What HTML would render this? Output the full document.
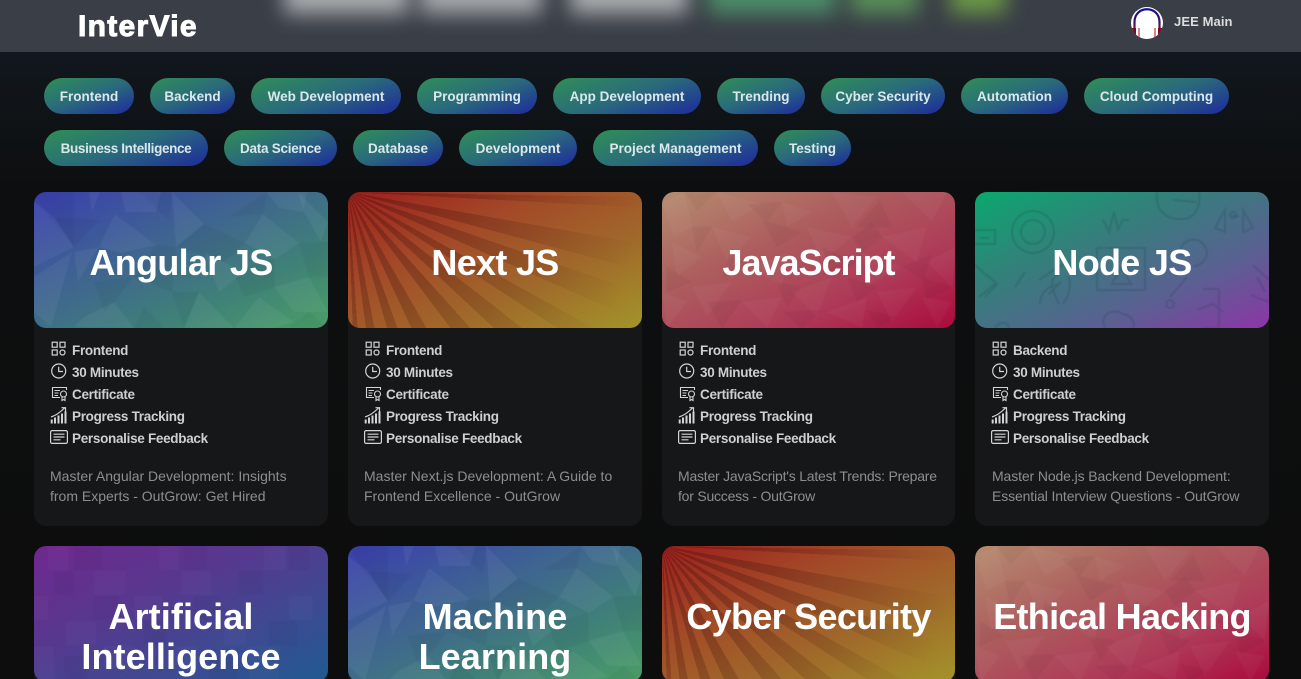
<!DOCTYPE html>
<html lang="en"><head><meta charset="utf-8"><title>InterVie</title>
<style>
*{box-sizing:border-box}
html,body{margin:0;padding:0;width:1301px;height:679px;overflow:hidden;background:#0d0d0e}
body{position:relative;font-family:"Liberation Sans",sans-serif;background:linear-gradient(180deg,#11171d 52px,#0f1215 130px,#0d0e0f 190px,#0d0d0e 100%)}
header{position:absolute;left:0;top:0;width:1301px;height:52px;background:#3a3f47;overflow:hidden}
.b{position:absolute;top:-26px;height:40px;filter:blur(10px)}
.logo{position:absolute;left:78px;top:9px;font-size:30px;line-height:36px;font-weight:700;color:#fff;letter-spacing:1.3px;-webkit-text-stroke:1px #fff}
.user{position:absolute;left:1174px;top:14px;font-size:13px;line-height:16px;font-weight:700;color:#dcdcdc;letter-spacing:.1px}
.av{position:absolute;left:1131px;top:6px}
.pill{position:absolute;height:36px;border-radius:18px;background:linear-gradient(160deg,#2f8f55 0%,#2a6a7c 50%,#1d2a9c 100%);color:#dbe8ea;font-size:13.5px;font-weight:700;line-height:38px;text-align:center;letter-spacing:0;white-space:nowrap}
.card{position:absolute;width:294px;height:334px;background:#161719;border-radius:12px}
.card.c{height:133px;overflow:hidden;border-radius:12px 12px 0 0}
.img{position:absolute;left:0;top:0;width:100%;height:136px;border-radius:12px;overflow:hidden}
.img svg{position:absolute;left:0;top:0;filter:blur(.5px)}
.rays{position:absolute;inset:0;background:conic-gradient(from 90deg at 0 0,transparent 0 1deg,rgba(50,10,10,.3) 1deg 3deg,transparent 3deg 10deg,rgba(50,10,10,.3) 10deg 15deg,transparent 15deg 19deg,rgba(50,10,10,.3) 19deg 24deg,transparent 24deg 29deg,rgba(50,10,10,.3) 29deg 33deg,transparent 33deg 38deg,rgba(50,10,10,.3) 38deg 43deg,transparent 43deg 48deg,rgba(50,10,10,.3) 48deg 53deg,transparent 53deg 60deg,rgba(50,10,10,.3) 60deg 65deg,transparent 65deg 70deg,rgba(50,10,10,.3) 70deg 74deg,transparent 74deg 79deg,rgba(50,10,10,.3) 79deg 82.5deg,transparent 82.5deg 86deg,rgba(50,10,10,.3) 86deg 88deg,transparent 88deg 360deg);-webkit-mask-image:radial-gradient(circle at 0 0,#000 0,rgba(0,0,0,.75) 120px,rgba(0,0,0,.28) 230px,transparent 290px);mask-image:radial-gradient(circle at 0 0,#000 0,rgba(0,0,0,.75) 120px,rgba(0,0,0,.28) 230px,transparent 290px)}
.t{position:absolute;left:0;top:51px;width:100%;text-align:center;color:#fff;font-size:36px;line-height:40px;font-weight:700;letter-spacing:-.7px;white-space:nowrap}
.t.two{letter-spacing:.1px}
.t.js{letter-spacing:-1px}
.r{position:absolute;left:38px;font-size:13.5px;line-height:22px;font-weight:700;color:#cfcfcf;letter-spacing:-.3px;white-space:nowrap;margin-top:1px}
.ic{position:absolute;left:16px;width:20px;height:20px;color:#d4d4d4}
.d{position:absolute;left:16px;top:274px;width:270px;color:#8e8e8e;font-size:14px;line-height:20px;white-space:nowrap}
</style></head><body>
<svg width="0" height="0" style="position:absolute">
<defs>
<symbol id="i1" viewBox="0 0 20 20"><g fill="none" stroke="currentColor" stroke-width="1.2"><rect x="2.2" y="2.200" width="5" height="5"/><rect x="10" y="2.200" width="5" height="5"/><rect x="2.2" y="10" width="5" height="5"/><circle cx="12.500" cy="12.500" r="2.500"/></g></symbol>
<symbol id="i2" viewBox="0 0 20 20"><g fill="none" stroke="currentColor" stroke-width="1.2"><circle cx="8.700" cy="9" r="7"/><path d="M8.700 4.800V9.500H13"/></g></symbol>
<symbol id="i3" viewBox="0 0 20 20"><g fill="none" stroke="currentColor" stroke-width="1.1"><path d="M10 13.500H2.500V3.500H16.500V6"/><path d="M4.500 6.500H10M4.500 9H8.500M4.500 11.500H8"/><circle cx="13.500" cy="10" r="3"/><path d="M12 13V16.500L13.500 15.500L15 16.500V13"/></g></symbol>
<symbol id="i4" viewBox="0 0 20 20"><g fill="currentColor"><rect x=".7" y="13.500" width="2" height="4"/><rect x="4" y="11.500" width="2" height="6"/><rect x="7.500" y="9.500" width="2" height="8"/><rect x="11" y="7.500" width="2" height="10"/><rect x="14.500" y="5.500" width="2" height="12"/></g><path d="M1 11C6 9.500 10 6.500 14.500 2M11.500 1.700H15.500V5.500" fill="none" stroke="currentColor" stroke-width="1.200"/></symbol>
<symbol id="i5" viewBox="0 0 20 20"><g fill="none" stroke="currentColor" stroke-width="1.200"><rect x=".6" y="2.600" width="16.800" height="12.800" rx="1.500"/><path d="M3.500 6.200H14.500M3.500 9H14.500M3.500 11.800H10.500"/></g></symbol>

<symbol id="poly1" viewBox="0 0 294 136">
<g fill="#fff" fill-opacity=".05">
<polygon points="81,22 122,53 87,61 65,55"/><polygon points="138,0 170,32 142,55"/><polygon points="211,51 229,22 265,51 241,67"/><polygon points="87,0 127,0 122,20 91,20"/><polygon points="233,0 273,0 269,20 245,16"/><polygon points="55,0 66,0 58,20"/><polygon points="0,85 38,60 17,135 0,120"/><polygon points="40,135 50,125 80,110 100,136"/><polygon points="150,136 165,100 200,136"/><polygon points="200,136 225,105 260,130 240,136"/><polygon points="264,0 294,30 287,50 270,20"/><polygon points="170,60 210,80 185,100"/><polygon points="0,10 20,25 40,55 0,75"/><polygon points="240,95 275,85 294,120 260,120"/><polygon points="40,60 65,55 44,90"/>
</g>
<g fill="#000" fill-opacity=".04">
<polygon points="122,53 142,55 138,100 100,85"/><polygon points="0,0 40,0 40,55 15,25"/><polygon points="170,32 211,51 190,70 142,55"/><polygon points="229,22 233,0 195,25"/><polygon points="60,90 100,85 80,110 70,120"/><polygon points="100,136 110,115 130,136"/><polygon points="138,100 165,100 150,136"/><polygon points="200,80 240,67 241,95 210,105"/><polygon points="265,51 294,50 294,85 275,85"/><polygon points="255,136 275,120 294,136"/><polygon points="20,25 65,28 40,55"/><polygon points="105,0 138,0 135,28"/>
</g>
</symbol>

<symbol id="poly2" viewBox="0 0 294 136">
<g fill="#fff" fill-opacity=".035">
<polygon points="0,10 22,0 30,35 12,45"/><polygon points="55,0 100,12 70,30"/><polygon points="120,10 150,20 125,35"/><polygon points="170,0 215,5 190,35"/><polygon points="240,0 285,0 270,30"/><polygon points="50,35 90,45 65,70"/><polygon points="145,35 190,45 160,70"/><polygon points="220,45 265,35 255,70"/><polygon points="10,50 40,65 15,85"/><polygon points="90,75 125,60 120,95"/><polygon points="200,60 240,75 205,95"/><polygon points="265,70 294,55 290,95"/><polygon points="30,95 70,90 45,125"/><polygon points="130,100 170,85 155,125"/><polygon points="215,100 255,95 230,130"/><polygon points="80,110 120,105 105,136"/><polygon points="165,120 205,105 200,136"/><polygon points="260,105 290,110 275,136"/><polygon points="0,100 25,110 5,136"/>
</g>
<g fill="#000" fill-opacity=".04">
<polygon points="22,0 55,0 35,18"/><polygon points="85,12 120,10 105,30"/><polygon points="195,35 218,8 230,35"/><polygon points="30,35 50,35 35,60"/><polygon points="100,28 140,40 115,55"/><polygon points="190,45 210,30 220,45 200,60"/><polygon points="70,55 90,75 60,85"/><polygon points="160,55 195,70 170,85"/><polygon points="240,75 270,62 262,88"/><polygon points="5,75 30,90 5,100"/><polygon points="115,90 140,95 125,115"/><polygon points="185,85 215,95 195,110"/><polygon points="260,85 290,95 265,108"/><polygon points="45,110 80,108 60,136"/><polygon points="120,120 160,118 140,136"/><polygon points="205,118 235,125 215,136"/>
</g>
</symbol>

<symbol id="doodle" viewBox="0 0 294 136">
<g fill="none" stroke="#1d3a46" stroke-opacity=".2" stroke-width="2">
<circle cx="58" cy="40" r="21"/><circle cx="58" cy="40" r="12"/><path d="M0 38H20V52H0M5 46H14M128 28L134 40L139 20L143 37L148 28H154M182 0C180 18 190 28 208 27C222 26 226 12 224 0M198 8L222 10M250 18L240 36L250 40ZM268 18L278 36L268 40ZM256 24L264 24"/>
<path d="M130 56H170V98H122V56H128M146 76L137 92H156ZM206 65C201 46 228 40 232 60C232 68 226 74 218 74"/>
<path d="M64 88L88 72M40 95L50 80M0 73L22 92L10 105M4 105L20 92M74 102L86 90M84 112C76 95 73 88 84 82M65 112C65 102 72 94 84 92M88 112C94 104 96 96 94 85"/>
<path d="M195 105L212 85M228 97H244V136H228M222 118L238 112L248 120M278 73L294 88M276 103L294 110M282 85L290 100M130 136C124 124 136 115 148 122C158 124 160 132 158 136M20 136C24 130 32 128 34 136"/>
<circle cx="195" cy="112" r="4"/><circle cx="258" cy="23" r="3"/>
</g>
</symbol>

<symbol id="grid" viewBox="0 0 294 136">
<g fill="#fff" fill-opacity=".025">
<rect x="14" y="0" width="20" height="24"/><rect x="60" y="25" width="32" height="24"/><rect x="125" y="0" width="20" height="24"/><rect x="147" y="25" width="30" height="24"/><rect x="230" y="0" width="22" height="24"/><rect x="0" y="50" width="14" height="24"/><rect x="32" y="75" width="30" height="24"/><rect x="100" y="50" width="28" height="24"/><rect x="190" y="75" width="22" height="24"/><rect x="255" y="50" width="24" height="24"/><rect x="70" y="100" width="30" height="24"/><rect x="140" y="100" width="24" height="24"/><rect x="215" y="100" width="30" height="36"/><rect x="0" y="100" width="20" height="36"/>
</g>
<g fill="#000" fill-opacity=".03">
<rect x="40" y="0" width="28" height="24"/><rect x="150" y="0" width="22" height="24"/><rect x="255" y="0" width="20" height="24"/><rect x="20" y="25" width="20" height="24"/><rect x="205" y="25" width="24" height="24"/><rect x="60" y="50" width="24" height="24"/><rect x="160" y="50" width="26" height="24"/><rect x="110" y="75" width="22" height="24"/><rect x="235" y="75" width="28" height="24"/><rect x="30" y="110" width="24" height="26"/><rect x="175" y="110" width="28" height="26"/>
</g>
</symbol>
</defs>
</svg>

<header>
<div class="b" style="left:284px;width:125px;background:#a8abae"></div>
<div class="b" style="left:420px;width:122px;background:#a4a7ab"></div>
<div class="b" style="left:570px;width:118px;background:#a8abae"></div>
<div class="b" style="left:708px;width:128px;background:#4c8e6a"></div>
<div class="b" style="left:850px;width:68px;background:#588e57"></div>
<div class="b" style="left:950px;width:56px;background:#6a9846"></div>
<div class="logo">InterVie</div>
<svg class="av" width="32" height="34" viewBox="0 0 32 34">
<defs><linearGradient id="hp" x1="0" y1="0" x2="0" y2="1"><stop offset="0" stop-color="#1c0f8c"/><stop offset=".5" stop-color="#3a0f68"/><stop offset="1" stop-color="#9c0a20"/></linearGradient><clipPath id="ac"><ellipse cx="16" cy="17" rx="16" ry="16"/></clipPath></defs>
<ellipse cx="16" cy="17" rx="16" ry="16" fill="#fff"/>
<g clip-path="url(#ac)">
<path d="M3.500 28V16C3.500 -1 28.500 -1 28.500 16V28" fill="none" stroke="url(#hp)" stroke-width="2.200"/>
<path d="M0 22H5V34H0ZM27 22H32V34H27Z" fill="#7a0a1e"/>
<path d="M8 22V34M24 22V34" stroke="#d22c3c" stroke-width="1.200"/>
</g>
</svg>
<div class="user">JEE Main</div>
</header>

<div class="pill" style="left:44px;top:78px;width:90px">Frontend</div>
<div class="pill" style="left:150px;top:78px;width:85px">Backend</div>
<div class="pill" style="left:251px;top:78px;width:150px">Web Development</div>
<div class="pill" style="left:417px;top:78px;width:120px">Programming</div>
<div class="pill" style="left:553px;top:78px;width:148px">App Development</div>
<div class="pill" style="left:717px;top:78px;width:88px">Trending</div>
<div class="pill" style="left:821px;top:78px;width:124px">Cyber Security</div>
<div class="pill" style="left:961px;top:78px;width:107px">Automation</div>
<div class="pill" style="left:1084px;top:78px;width:145px">Cloud Computing</div>
<div class="pill" style="left:44px;top:130px;width:164px;letter-spacing:-.35px">Business Intelligence</div>
<div class="pill" style="left:224px;top:130px;width:113px;letter-spacing:-.25px">Data Science</div>
<div class="pill" style="left:353px;top:130px;width:90px">Database</div>
<div class="pill" style="left:459px;top:130px;width:118px">Development</div>
<div class="pill" style="left:593px;top:130px;width:165px">Project Management</div>
<div class="pill" style="left:774px;top:130px;width:77px">Testing</div>

<div class="card" style="left:34px;top:192px">
<div class="img" style="background:linear-gradient(155deg,#3a3fae 0%,#3f6590 40%,#3f8078 70%,#4a9e66 100%)"><svg width="294" height="136"><use href="#poly1"/></svg><div class="t">Angular JS</div></div>
<svg class="ic" style="top:148px"><use href="#i1"/></svg><div class="r" style="top:147px">Frontend</div>
<svg class="ic" style="top:170px"><use href="#i2"/></svg><div class="r" style="top:169px">30 Minutes</div>
<svg class="ic" style="top:192px"><use href="#i3"/></svg><div class="r" style="top:191px">Certificate</div>
<svg class="ic" style="top:214px"><use href="#i4"/></svg><div class="r" style="top:213px">Progress Tracking</div>
<svg class="ic" style="top:236px"><use href="#i5"/></svg><div class="r" style="top:235px">Personalise Feedback</div>
<div class="d">Master Angular Development: Insights<br>from Experts - OutGrow: Get Hired</div>
</div>

<div class="card" style="left:348px;top:192px">
<div class="img" style="background:linear-gradient(155deg,#9c1f1c 0%,#a34a28 35%,#a0682a 65%,#a3942a 100%)"><div class="rays"></div><div class="t">Next JS</div></div>
<svg class="ic" style="top:148px"><use href="#i1"/></svg><div class="r" style="top:147px">Frontend</div>
<svg class="ic" style="top:170px"><use href="#i2"/></svg><div class="r" style="top:169px">30 Minutes</div>
<svg class="ic" style="top:192px"><use href="#i3"/></svg><div class="r" style="top:191px">Certificate</div>
<svg class="ic" style="top:214px"><use href="#i4"/></svg><div class="r" style="top:213px">Progress Tracking</div>
<svg class="ic" style="top:236px"><use href="#i5"/></svg><div class="r" style="top:235px">Personalise Feedback</div>
<div class="d">Master Next.js Development: A Guide to<br>Frontend Excellence - OutGrow</div>
</div>

<div class="card" style="left:662px;top:192px;width:293px">
<div class="img" style="background:linear-gradient(155deg,#b68c70 0%,#ad5f5e 35%,#ae3a58 70%,#aa0a3c 100%)"><svg width="294" height="136"><use href="#poly2"/></svg><div class="t js">JavaScript</div></div>
<svg class="ic" style="top:148px"><use href="#i1"/></svg><div class="r" style="top:147px">Frontend</div>
<svg class="ic" style="top:170px"><use href="#i2"/></svg><div class="r" style="top:169px">30 Minutes</div>
<svg class="ic" style="top:192px"><use href="#i3"/></svg><div class="r" style="top:191px">Certificate</div>
<svg class="ic" style="top:214px"><use href="#i4"/></svg><div class="r" style="top:213px">Progress Tracking</div>
<svg class="ic" style="top:236px"><use href="#i5"/></svg><div class="r" style="top:235px">Personalise Feedback</div>
<div class="d" style="letter-spacing:-.22px">Master JavaScript's Latest Trends: Prepare<br>for Success - OutGrow</div>
</div>

<div class="card" style="left:975px;top:192px">
<div class="img" style="background:linear-gradient(155deg,#0aa86e 0%,#33807a 35%,#5a6092 70%,#8d35a5 100%)"><svg width="294" height="136"><use href="#doodle"/></svg><div class="t">Node JS</div></div>
<svg class="ic" style="top:148px"><use href="#i1"/></svg><div class="r" style="top:147px">Backend</div>
<svg class="ic" style="top:170px"><use href="#i2"/></svg><div class="r" style="top:169px">30 Minutes</div>
<svg class="ic" style="top:192px"><use href="#i3"/></svg><div class="r" style="top:191px">Certificate</div>
<svg class="ic" style="top:214px"><use href="#i4"/></svg><div class="r" style="top:213px">Progress Tracking</div>
<svg class="ic" style="top:236px"><use href="#i5"/></svg><div class="r" style="top:235px">Personalise Feedback</div>
<div class="d" style="left:17px;letter-spacing:-.12px">Master Node.js Backend Development:<br>Essential Interview Questions - OutGrow</div>
</div>

<div class="card c" style="left:34px;top:546px">
<div class="img" style="background:linear-gradient(155deg,#70288e 0%,#55398f 40%,#3d4a92 70%,#1f5a90 100%)"><svg width="294" height="136"><use href="#grid"/></svg><div class="t two">Artificial<br>Intelligence</div></div>
</div>
<div class="card c" style="left:348px;top:546px">
<div class="img" style="background:linear-gradient(155deg,#3a3fae 0%,#3f6590 40%,#3f8078 70%,#4a9e66 100%)"><svg width="294" height="136"><use href="#poly1"/></svg><div class="t two">Machine<br>Learning</div></div>
</div>
<div class="card c" style="left:662px;top:546px;width:293px">
<div class="img" style="background:linear-gradient(155deg,#9c1f1c 0%,#a34a28 35%,#a0682a 65%,#a3942a 100%)"><div class="rays"></div><div class="t">Cyber Security</div></div>
</div>
<div class="card c" style="left:975px;top:546px">
<div class="img" style="background:linear-gradient(155deg,#b68c70 0%,#ad5f5e 35%,#ae3a58 70%,#aa0a3c 100%)"><svg width="294" height="136"><use href="#poly2"/></svg><div class="t">Ethical Hacking</div></div>
</div>
</body></html>
